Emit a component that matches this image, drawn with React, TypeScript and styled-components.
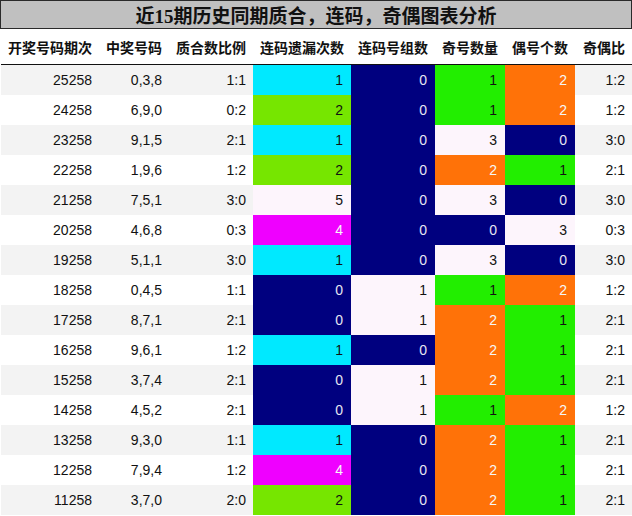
import React from "react";
import styled, { createGlobalStyle } from "styled-components";

const Global = createGlobalStyle`
  html, body { margin: 0; padding: 0; background: #ffffff; }
  body { font-family: "Liberation Sans", "Noto Sans CJK SC", sans-serif; }
`;

const COLORS: Record<string, { bg: string; fg: string }> = {
  cyan: { bg: "#00e9ff", fg: "#111111" },
  lime: { bg: "#76e600", fg: "#111111" },
  navy: { bg: "#00007f", fg: "#e6e6f2" },
  green: { bg: "#22ee00", fg: "#111111" },
  orange: { bg: "#ff7208", fg: "#f7f7f7" },
  magenta: { bg: "#ef00ff", fg: "#f7f7f7" },
  pale: { bg: "#fdf5fc", fg: "#111111" },
};

type C = [number, string];
type Row = [string, string, string, C, C, C, C, string];

const rows: Row[] = [
  ["25258", "0,3,8", "1:1", [1, "cyan"], [0, "navy"], [1, "green"], [2, "orange"], "1:2"],
  ["24258", "6,9,0", "0:2", [2, "lime"], [0, "navy"], [1, "green"], [2, "orange"], "1:2"],
  ["23258", "9,1,5", "2:1", [1, "cyan"], [0, "navy"], [3, "pale"], [0, "navy"], "3:0"],
  ["22258", "1,9,6", "1:2", [2, "lime"], [0, "navy"], [2, "orange"], [1, "green"], "2:1"],
  ["21258", "7,5,1", "3:0", [5, "pale"], [0, "navy"], [3, "pale"], [0, "navy"], "3:0"],
  ["20258", "4,6,8", "0:3", [4, "magenta"], [0, "navy"], [0, "navy"], [3, "pale"], "0:3"],
  ["19258", "5,1,1", "3:0", [1, "cyan"], [0, "navy"], [3, "pale"], [0, "navy"], "3:0"],
  ["18258", "0,4,5", "1:1", [0, "navy"], [1, "pale"], [1, "green"], [2, "orange"], "1:2"],
  ["17258", "8,7,1", "2:1", [0, "navy"], [1, "pale"], [2, "orange"], [1, "green"], "2:1"],
  ["16258", "9,6,1", "1:2", [1, "cyan"], [0, "navy"], [2, "orange"], [1, "green"], "2:1"],
  ["15258", "3,7,4", "2:1", [0, "navy"], [1, "pale"], [2, "orange"], [1, "green"], "2:1"],
  ["14258", "4,5,2", "2:1", [0, "navy"], [1, "pale"], [1, "green"], [2, "orange"], "1:2"],
  ["13258", "9,3,0", "1:1", [1, "cyan"], [0, "navy"], [2, "orange"], [1, "green"], "2:1"],
  ["12258", "7,9,4", "1:2", [4, "magenta"], [0, "navy"], [2, "orange"], [1, "green"], "2:1"],
  ["11258", "3,7,0", "2:0", [2, "lime"], [0, "navy"], [2, "orange"], [1, "green"], "2:1"],
];

const headers = ["开奖号码期次", "中奖号码", "质合数比例", "连码遗漏次数", "连码号组数", "奇号数量", "偶号个数", "奇偶比"];

const COLS = "98px 70px 84px 98px 84px 70px 70px 57px";

const Page = styled.div`
  width: 632px;
  height: 516px;
  overflow: hidden;
  background: #ffffff;
`;

const Title = styled.div`
  height: 27px;
  border: 1px solid #2a2a2a;
  background: #c0c0c0;
  display: flex;
  align-items: center;
  justify-content: center;
  font-family: "Liberation Serif", "Noto Sans CJK SC", serif;
  font-weight: bold;
  font-size: 19px;
  color: #111111;
  box-sizing: content-box;
`;

const Grid = styled.div`
  display: grid;
  grid-template-columns: ${COLS};
  padding-left: 1px;
`;

const HeadCell = styled.div`
  height: 35px;
  border-bottom: 1px solid #111111;
  display: flex;
  align-items: center;
  justify-content: flex-end;
  padding-right: 7px;
  font-family: "Noto Sans CJK SC", sans-serif;
  font-weight: bold;
  font-size: 14px;
  color: #111111;
  white-space: nowrap;
  background: #ffffff;
`;

const Cell = styled.div<{ $bg: string; $fg: string; $pad?: number }>`
  height: 30px;
  display: flex;
  align-items: center;
  justify-content: flex-end;
  padding-right: ${(p) => p.$pad ?? 7}px;
  background: ${(p) => p.$bg};
  color: ${(p) => p.$fg};
  font-family: "Liberation Sans", sans-serif;
  font-size: 14px;
  white-space: nowrap;
`;

export default function App() {
  return (
    <Page>
      <Global />
      <Title>近15期历史同期质合，连码，奇偶图表分析</Title>
      <Grid>
        {headers.map((h) => (
          <HeadCell key={h}>{h}</HeadCell>
        ))}
        {rows.map((r, i) => {
          const stripe = i % 2 === 0 ? "#f3f3f3" : "#ffffff";
          const colored = [r[3], r[4], r[5], r[6]];
          return (
            <React.Fragment key={r[0]}>
              <Cell $bg={stripe} $fg="#111111">{r[0]}</Cell>
              <Cell $bg={stripe} $fg="#111111">{r[1]}</Cell>
              <Cell $bg={stripe} $fg="#111111">{r[2]}</Cell>
              {colored.map(([v, c], j) => (
                <Cell key={j} $bg={COLORS[c].bg} $fg={COLORS[c].fg} $pad={8}>
                  {v}
                </Cell>
              ))}
              <Cell $bg={stripe} $fg="#111111">{r[7]}</Cell>
            </React.Fragment>
          );
        })}
      </Grid>
    </Page>
  );
}
